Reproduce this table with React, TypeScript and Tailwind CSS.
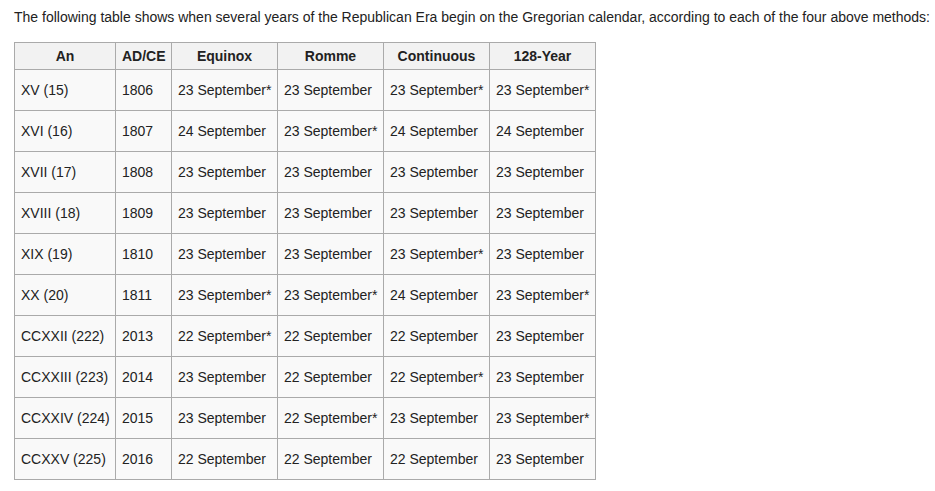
import React from "react";

const rows: string[][] = [
  ["XV (15)", "1806", "23 September*", "23 September", "23 September*", "23 September*"],
  ["XVI (16)", "1807", "24 September", "23 September*", "24 September", "24 September"],
  ["XVII (17)", "1808", "23 September", "23 September", "23 September", "23 September"],
  ["XVIII (18)", "1809", "23 September", "23 September", "23 September", "23 September"],
  ["XIX (19)", "1810", "23 September", "23 September", "23 September*", "23 September"],
  ["XX (20)", "1811", "23 September*", "23 September*", "24 September", "23 September*"],
  ["CCXXII (222)", "2013", "22 September*", "22 September", "22 September", "23 September"],
  ["CCXXIII (223)", "2014", "23 September", "22 September", "22 September*", "23 September"],
  ["CCXXIV (224)", "2015", "23 September", "22 September*", "23 September", "23 September*"],
  ["CCXXV (225)", "2016", "22 September", "22 September", "22 September", "23 September"],
];

const headers = ["An", "AD/CE", "Equinox", "Romme", "Continuous", "128-Year"];
const widths = [101, 56, 106, 106, 106, 106];

export default function App() {
  return (
    <div className="bg-white text-[#222222] text-[14px] px-[14px] pt-[6px]" style={{ fontFamily: '"Liberation Sans", Arial, sans-serif' }}>
      <p className="leading-[22px] whitespace-nowrap">
        The following table shows when several years of the Republican Era begin on the Gregorian calendar, according to each of the four above methods:
      </p>
      <table className="mt-[14px] border-collapse table-fixed w-[582px] bg-[#f9f9f9]">
        <colgroup>
          {widths.map((w, i) => (
            <col key={i} style={{ width: w }} />
          ))}
        </colgroup>
        <thead>
          <tr className="h-[27px]">
            {headers.map((h) => (
              <th key={h} className="border border-[#aaaaaa] bg-[#f2f2f2] font-bold text-center px-[6px] py-0">
                {h}
              </th>
            ))}
          </tr>
        </thead>
        <tbody>
          {rows.map((r, i) => (
            <tr key={i} className="h-[41px]">
              {r.map((c, j) => (
                <td key={j} className="border border-[#aaaaaa] px-[6px] py-0 whitespace-nowrap">
                  {c}
                </td>
              ))}
            </tr>
          ))}
        </tbody>
      </table>
    </div>
  );
}
